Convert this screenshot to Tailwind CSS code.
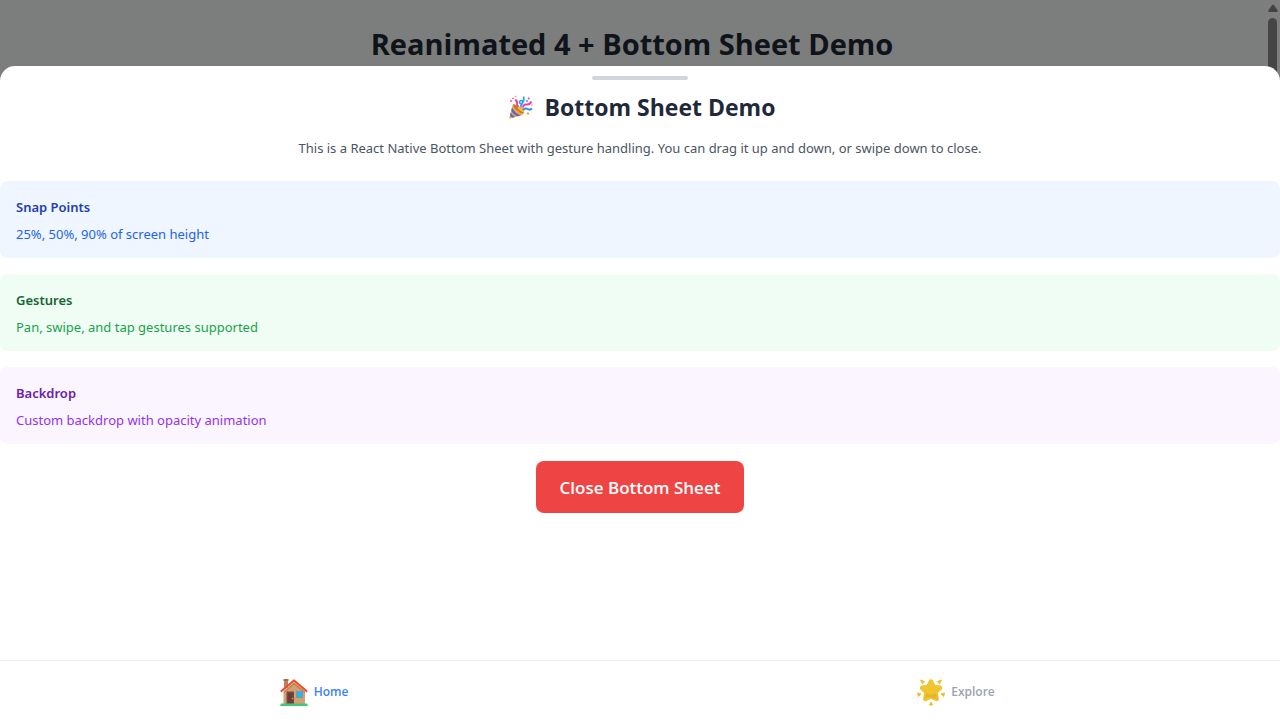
<!DOCTYPE html>
<html lang="en">
<head>
<meta charset="utf-8">
<meta name="viewport" content="width=device-width, initial-scale=1">
<title>Bottom Sheet Demo</title>
<script src="https://cdn.jsdelivr.net/npm/@tailwindcss/browser@4"></script>
</head>
<body class="flex h-screen flex-col overflow-hidden bg-white font-['Noto_Sans','Open_Sans',sans-serif]">
  <main class="relative flex-1 overflow-hidden bg-[#f9fafb]">
    <h1 class="pt-6 pr-4 text-center font-['Open_Sans','Noto_Sans',sans-serif] text-[29px] leading-10 font-bold text-[#1f2937]">Reanimated 4 + Bottom Sheet Demo</h1>
    <!-- page scrollbar -->
    <div class="absolute inset-y-0 right-0 flex w-[15px] flex-col items-center gap-[6px] bg-[#fcfcfc] pt-1" aria-hidden="true">
      <svg class="h-2 w-[10px] shrink-0" viewBox="0 0 10 8"><path d="M4.2 1Q5 0 5.800 1L9.600 6.200Q10 8 8.800 8H1.200Q0 8 .4 6.200Z" fill="#858585"/></svg>
      <div class="h-3/5 w-[9px] rounded-full bg-[#8b8b8b]"></div>
    </div>
    <div class="absolute inset-0 bg-black/50"></div>
    <section class="absolute inset-x-0 bottom-0 h-9/10 rounded-t-[15px] bg-white" aria-labelledby="sheet-title">
      <div class="flex justify-center pt-[10px]"><div class="h-1 w-24 rounded-full bg-[#d1d5de]"></div></div>
      <div class="flex items-center justify-center gap-3 pt-[11px] pb-px pl-1">
        <svg class="size-6" viewBox="0 0 24 24" aria-hidden="true">
          <path d="M4 9Q10 11 15 18Q13 21 8 21.500L.8 23.500Q0 24 .3 22.800Z" fill="#eda83b"/>
          <path d="M4 9Q10 11 15 18Q12 19 9 16Q4 13 4 9Z" fill="#c9762d"/>
          <path d="M3 12.500Q6 18.500 11.700 20.500L8.500 21.300Q4 19.500 2.200 15.500ZM1.700 17.500Q3.500 21 6 22L3.500 22.700Q1.600 21.700 1 20Z" fill="#5265d8"/>
          <path d="M9 12Q12 10 14.500 13T14 17Q10 16 8 12Z" fill="#f6b93b"/>
          <path d="M6 5Q8.300 5.500 8 8Q7.500 10 9.300 12" stroke="#f13ca5" stroke-width="2" fill="none"/>
          <path d="M14.500 1.500Q15.500 6 13.300 8.200Q10.500 9.300 10.400 7Q10.800 5 14 6M13.300 8.200Q12.500 10 11.400 12" stroke="#2ea0ee" stroke-width="1.700" fill="none"/>
          <path d="M14 12.500Q14.500 9 17.500 9.500T22.500 6.500" stroke="#f13ca5" stroke-width="2" fill="none"/>
          <path d="M14 15Q16 12.500 18.500 14T23 13.500" stroke="#368de8" stroke-width="2" fill="none"/>
          <path d="M3 3.500l1-1 1 1-1 1ZM18.500 3.500l1.200-1.200 1.200 1.200-1.200 1.200Z" fill="#f13ca5"/>
          <path d="M5.500 1.500l1-1 1 1-1 1ZM17.500 18.500l1.500-1.500 1.500 1.500-1.500 1.500ZM22 10l1-1 1 1-1 1Z" fill="#f5a13a"/>
          <circle cx="2" cy="6" r=".9" fill="#f13ca5"/><circle cx="18" cy="6" r="1" fill="#2ea0ee"/>
        </svg>
        <h2 id="sheet-title" class="font-['Open_Sans','Noto_Sans',sans-serif] text-[23px] leading-8 font-bold text-[#1f2937]">Bottom Sheet Demo</h2>
      </div>
      <p class="pt-3 pb-[21px] text-center text-[13px] leading-6 text-[#4b5563]">This is a React Native Bottom Sheet with gesture handling. You can drag it up and down, or swipe down to close.</p>
      <div class="flex flex-col gap-4">
        <article class="rounded-lg bg-[#eff6ff] px-4 pt-[14px] pb-3">
          <h3 class="text-[13px] leading-6 font-semibold text-[#1e40af]">Snap Points</h3>
          <p class="pt-[3px] text-[13px] leading-6 text-[#2563eb]">25%, 50%, 90% of screen height</p>
        </article>
        <article class="rounded-lg bg-[#f0fdf4] px-4 pt-[14px] pb-3">
          <h3 class="text-[13px] leading-6 font-semibold text-[#166534]">Gestures</h3>
          <p class="pt-[3px] text-[13px] leading-6 text-[#16a34a]">Pan, swipe, and tap gestures supported</p>
        </article>
        <article class="rounded-lg bg-[#faf5ff] px-4 pt-[14px] pb-3">
          <h3 class="text-[13px] leading-6 font-semibold text-[#6b21a8]">Backdrop</h3>
          <p class="pt-[3px] text-[13px] leading-6 text-[#9333ea]">Custom backdrop with opacity animation</p>
        </article>
        <button type="button" class="mt-px self-center rounded-lg bg-[#ef4444] px-6 pt-[13px] pb-[11px] font-['Open_Sans','Noto_Sans',sans-serif] text-[17px] leading-7 font-semibold text-white">Close Bottom Sheet</button>
      </div>
    </section>
  </main>
  <nav class="grid h-15 shrink-0 grid-cols-2 border-t border-[#eeeeee] bg-white pt-[2px] font-['Open_Sans','Noto_Sans',sans-serif] text-[12px] font-semibold">
    <a href="#home" class="flex items-center justify-center gap-[6px] pr-3 text-[#3b82f6]" aria-current="page">
      <svg class="size-7" viewBox="0 0 28 28" aria-hidden="true">
        <path d="M4 2H8V10H4Z" fill="#b98558"/><path d="M3.500 1H8.500V3H3.500Z" fill="#aa6b48"/>
        <path d="M3.500 13L14 4L25 13V26H3.500Z" fill="#d3a06f"/>
        <path d="M4 14L14 5L25 14V15L14 6.500L4 15Z" fill="#b77d52"/>
        <path d="M1.500 13L14 2.500L26.500 13" stroke="#ef4b2f" stroke-width="2.200" stroke-linecap="round" stroke-linejoin="round" fill="none"/>
        <path d="M6.500 13.500H14V26H6.500Z" fill="#79483f"/><path d="M8 15H12.500V25H8Z" fill="#6c3e38"/><circle cx="12.500" cy="20.500" r=".8" fill="#d5a34d"/>
        <path d="M16.500 13.500H22.500V19.500H16.500Z" fill="#28b5f5" stroke="#6596b5" stroke-width=".7"/>
        <path d="M1 25.500H27L28 28H0Z" fill="#42c77a"/>
      </svg>
      <span>Home</span>
    </a>
    <a href="#explore" class="flex items-center justify-center gap-[6px] pr-2 text-[#9ca3af]">
      <svg class="size-7" viewBox="0 0 28 28" aria-hidden="true">
        <path d="M14 3.500L16.700 9L23 9.800L18.500 14.200L19.700 21L14 18.200L8.300 21L9.500 14.200L5 9.800L11.300 9Z" fill="#f1c530" stroke="#f1c530" stroke-width="4.500" stroke-linejoin="round"/>
        <path d="M9 15Q14 18 19 15L20.500 21.500Q17.500 21 14 19.500T7.500 21.500Z" fill="#e5b52c"/>
        <path d="M3.500 2L7.500 3.500L5.500 5.800ZM24.500 2L20.500 3.500L22.500 5.800ZM.5 15L4 16L1.500 18.500ZM27.500 15L24 16L26.500 18.500ZM14 24L15.500 27H12.500Z" fill="#efbd2d" stroke="#efbd2d" stroke-linejoin="round"/>
      </svg>
      <span>Explore</span>
    </a>
  </nav>
</body>
</html>
